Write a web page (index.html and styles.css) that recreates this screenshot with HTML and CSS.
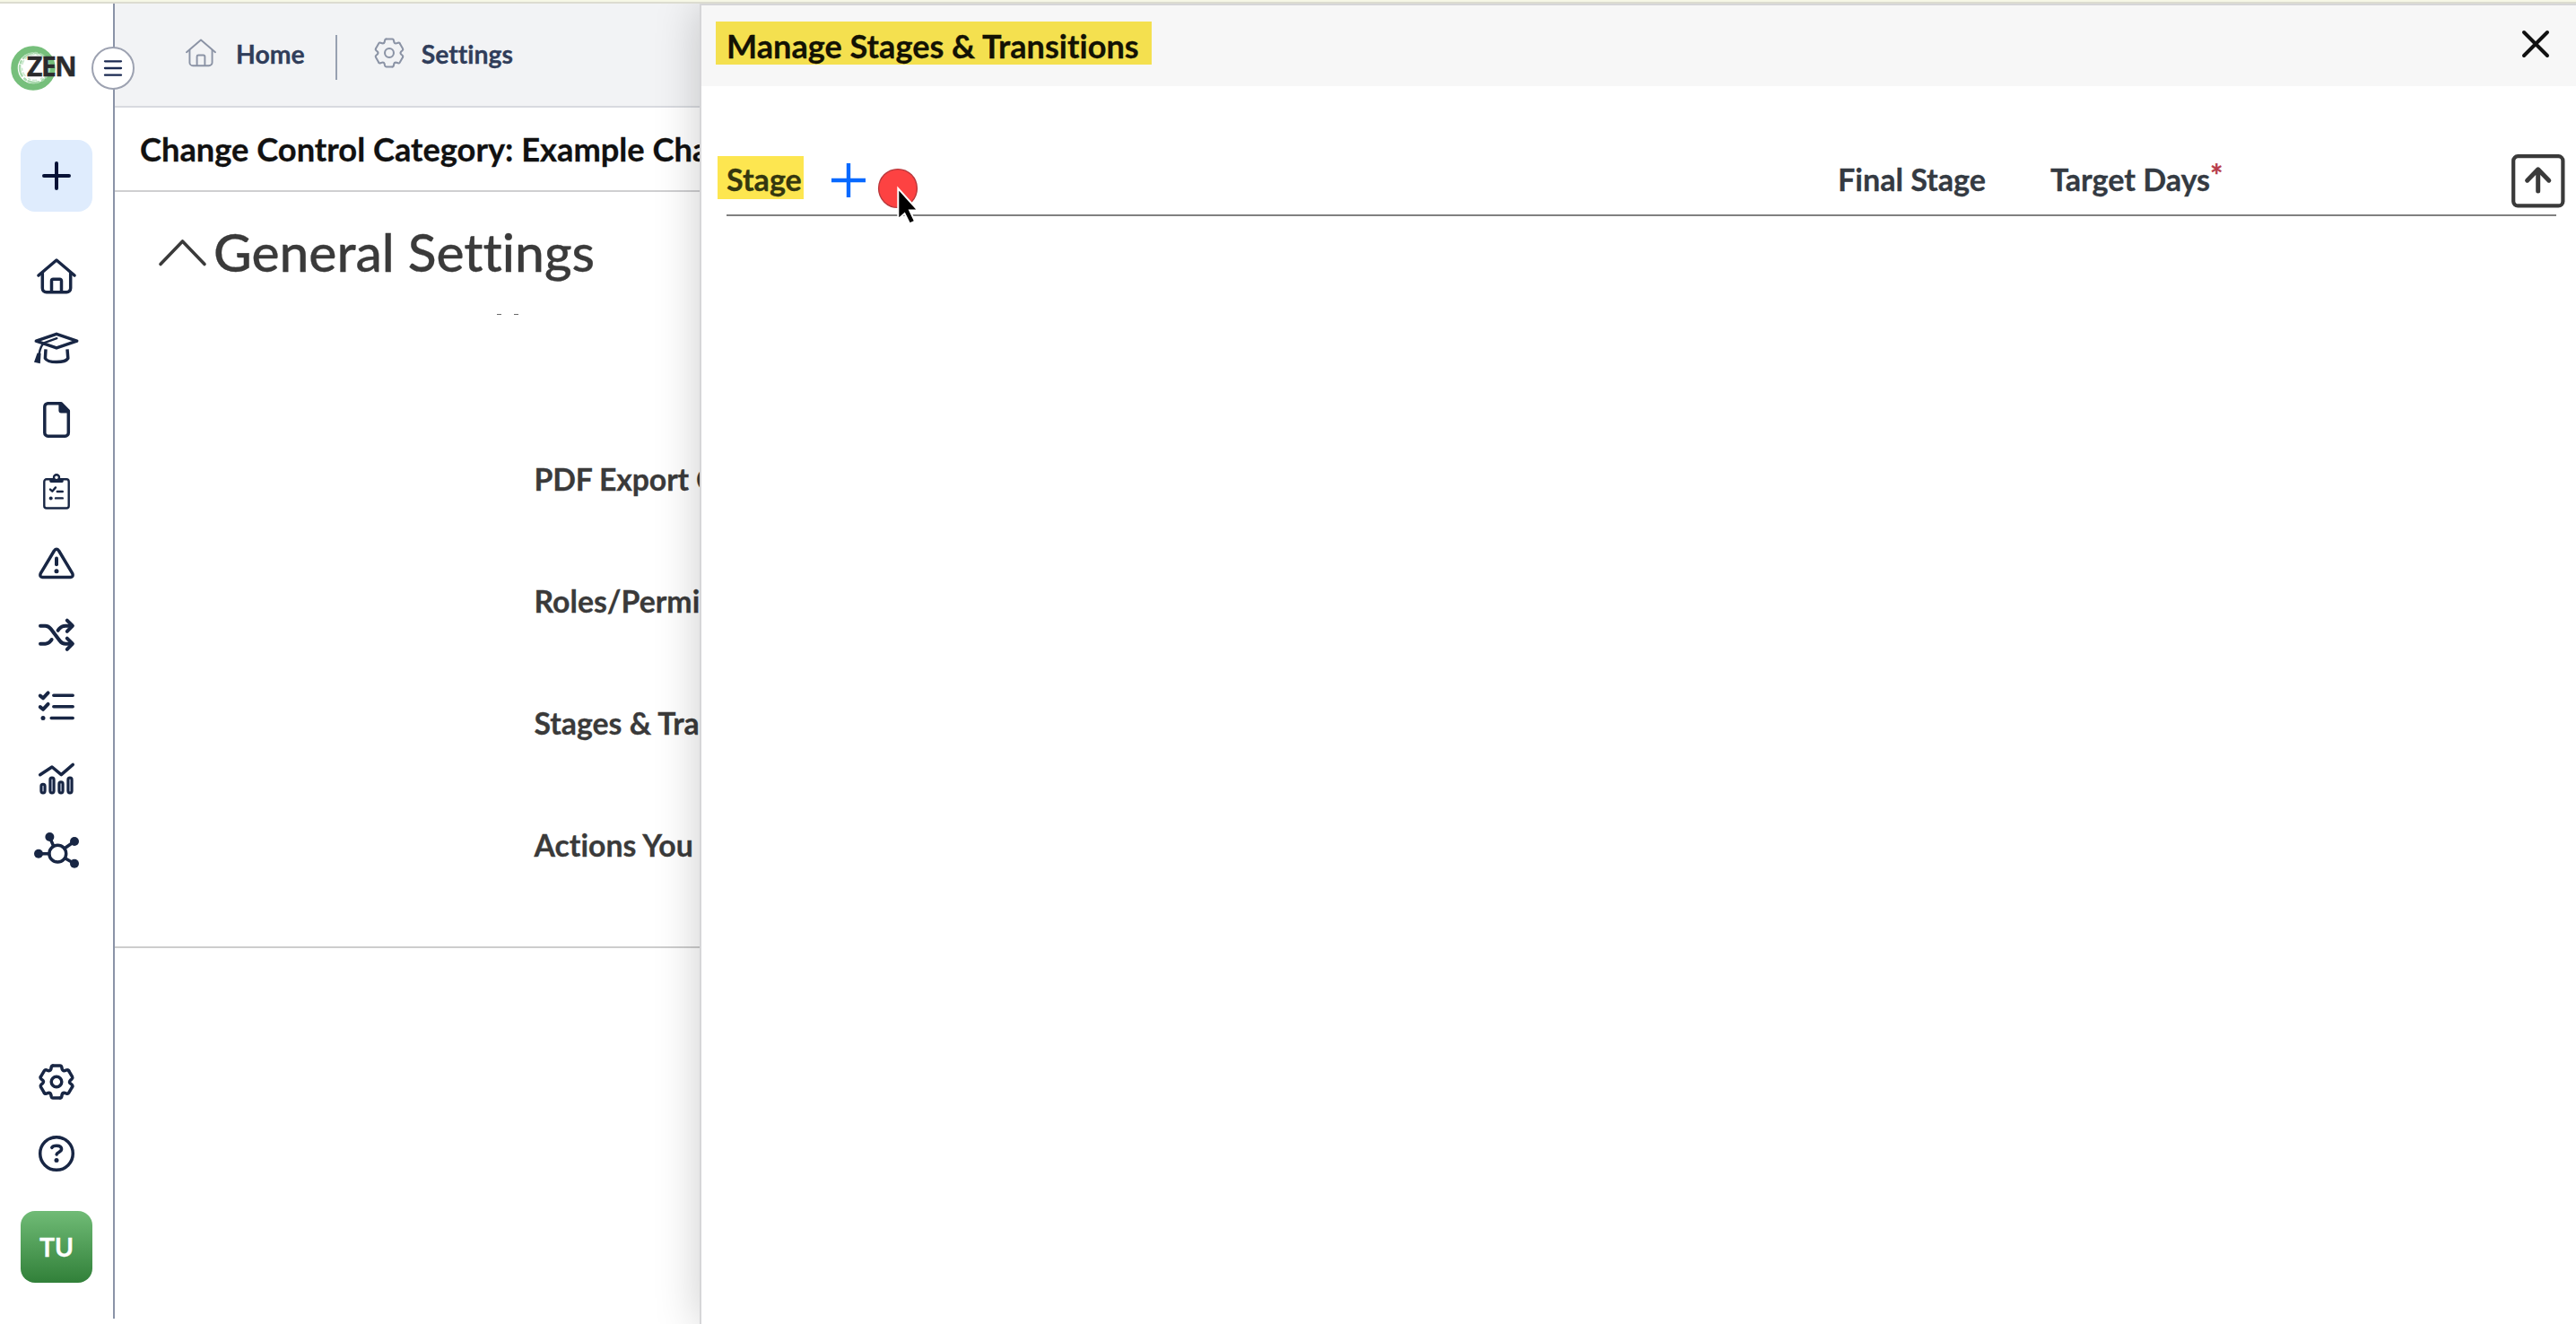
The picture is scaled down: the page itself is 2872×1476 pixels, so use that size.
FILE: index.html
```html
<!DOCTYPE html>
<html lang="en">
<head>
<meta charset="utf-8">
<title>Manage Stages &amp; Transitions</title>
<link rel="stylesheet" href="styles.css">
</head>
<body>
<svg class="defs" aria-hidden="true">
  <symbol id="home" viewBox="0 0 52 40">
    <path d="M6 19L26 2L46 19"/>
    <path d="M10.3 16V33.3a4.5 4.5 0 0 0 4.5 4.5H37.2a4.5 4.5 0 0 0 4.5-4.5V16"/>
    <path d="M20.5 37V25a1.8 1.8 0 0 1 1.8-1.8h7.4a1.8 1.8 0 0 1 1.8 1.8V37"/>
  </symbol>
  <symbol id="gear" viewBox="-21 -21 42 42">
    <g id="teeth">
      <path id="tooth" d="M-4-18H4Q5.4-18 5.8-16.4L6.2-14.2Q7-11.9 9.2-12.4L11.3-13.2Q12.9-13.7 13.6-12.5"/>
      <use href="#tooth" transform="rotate(60)"/>
      <use href="#tooth" transform="rotate(120)"/>
      <use href="#tooth" transform="rotate(180)"/>
      <use href="#tooth" transform="rotate(240)"/>
      <use href="#tooth" transform="rotate(300)"/>
    </g>
    <circle r="5.8"/>
  </symbol>
</svg>
<div class="top-strip"></div>
<div class="app">
  <aside class="sidebar">
    <div class="brand">
      <svg class="brand-ring" viewBox="0 0 52 52">
        <circle cx="26" cy="26" r="21" stroke="#76bf7b" stroke-width="7.5"/>
        <circle cx="27.5" cy="25.5" r="16.5" stroke="#a9d9ad" stroke-width="2.5" stroke-dasharray="3 2 7 3 2 4"/>
        <circle cx="28" cy="25" r="14.5" stroke="#c9e8cc" stroke-width="1.6" stroke-dasharray="2 5 4 3"/>
      </svg>
      <span class="brand-name">ZEN</span>
    </div>
    <button class="toggle"><svg viewBox="0 0 24 20"><path d="M3 2.3H21M3 10H21M3 17.7H21"/></svg></button>
    <button class="create"><svg viewBox="0 0 36 36"><path d="M18 4V32M4 18H32"/></svg></button>
    <nav class="nav">
      <a><svg class="icon"><use href="#home"/></svg></a>
      <a><svg class="icon" viewBox="0 0 52 40">
        <path d="M3.3 12.2L26 4.3L48.7 12.2L26 19.9Z"/>
        <path class="thin" d="M26.3 9.2L12.5 14.2Q8 17 6.6 27"/>
        <path class="solid" d="M4.6 25.5L1 35.8L7.8 37.3L8.6 26Z"/>
        <path d="M14 21.3L13.4 31.5C15 34.3 20 35.6 26 35.6S37 34.3 38.8 31.5L38 21.3" stroke-linecap="butt"/>
      </svg></a>
      <a><svg class="icon" viewBox="0 0 52 40">
        <path d="M16 1.7H31.2L39.3 10V34.5a3.7 3.7 0 0 1-3.7 3.7H16.5a3.7 3.7 0 0 1-3.7-3.7V5.4a3.7 3.7 0 0 1 3.7-3.7"/>
        <path class="solid" d="M28.4 1V10a2.4 2.4 0 0 0 2.4 2.4H40V9.5L31.5 1z"/>
      </svg></a>
      <a><svg class="icon fine" viewBox="0 0 52 40">
        <rect x="12.3" y="6.3" width="27.4" height="32.2" rx="2.6"/>
        <path class="solid" d="M18.3 5.5H33.7V8.5Q33.7 9.9 32.3 9.9H19.7Q18.3 9.9 18.3 8.5Z"/>
        <circle cx="26" cy="4.2" r="3" fill="#fff"/>
        <path d="M19 17.6L21.3 19.7L25 15.4M26.8 20H32.8M25 27.4H32.8"/>
        <circle class="solid" cx="19.7" cy="27.4" r="2"/>
      </svg></a>
      <a><svg class="icon" viewBox="0 0 52 40">
        <path d="M23.4 6Q26 2.6 28.6 6L43.8 31.3Q45.2 35.2 41.6 35.5H10.4Q6.8 35.2 8.2 31.3Z"/>
        <path class="bold" d="M26 14.4V21.3"/>
        <circle class="solid" cx="26" cy="28.7" r="2.5"/>
      </svg></a>
      <a><svg class="icon" viewBox="0 0 52 40">
        <path class="bold" d="M8 9.7H13.5C16.5 9.7 18 10.8 19.8 13.2L29.6 26.2C31.4 28.6 33 29.7 36 29.7H43"/>
        <path class="bold" d="M8 29.7H13.5C16.5 29.7 18 28.6 19.6 26.4L20.6 25M27.6 14.8L29.2 12.8C31 10.6 33 9.7 36 9.7H43"/>
        <path class="bold" d="M37.8 3.6L43.9 9.7L37.8 15.8M37.8 23.6L43.9 29.7L37.8 35.8"/>
      </svg></a>
      <a><svg class="icon" viewBox="0 0 52 40">
        <path class="bold" d="M7.8 7.6L11 10.3L16.6 4.4M7.8 20.1L11 22.8L16.6 16.9"/>
        <path d="M22.8 7.3H44.2M22.8 19.8H44.2M20.2 32.4H44.2"/>
        <circle class="solid" cx="11" cy="32.4" r="2.5"/>
      </svg></a>
      <a><svg class="icon" viewBox="0 0 52 40">
        <path d="M7.7 15.7L21 7L31.3 15.6L44.3 4.4"/>
        <g class="bars"><rect x="8.8" y="26.3" width="4.4" height="9.7" rx="2.2"/><rect x="18.8" y="19" width="4.4" height="17" rx="2.2"/><rect x="28.8" y="23.8" width="4.4" height="12.2" rx="2.2"/><rect x="38.8" y="19" width="4.4" height="17" rx="2.2"/></g>
      </svg></a>
      <a><svg class="icon" viewBox="0 0 52 40">
        <circle cx="27.3" cy="23.7" r="9.4"/>
        <path d="M18.5 5.5L22.8 15.5M46 10L35 17.8M6 23.7H17.5M46 34.7L35.5 28.8"/>
        <g class="solid"><circle cx="18.4" cy="5" r="5"/><circle cx="46" cy="10" r="5"/><circle cx="6" cy="23.7" r="5"/><circle cx="46" cy="34.7" r="5"/></g>
      </svg></a>
    </nav>
    <div class="nav nav-bottom">
      <a><svg class="icon gear"><use href="#gear"/></svg></a>
      <a><svg class="icon" viewBox="-26 -20 52 40">
        <circle r="18.3"/>
        <path d="M-5.2-6.6C-4.4-8.2-2.4-8.8 0-8.8C3.4-8.8 5.6-7.3 5.6-4.9C5.6-1.6.5-1.6.1 1.1"/>
        <circle class="solid" cy="7.4" r="2.5"/>
      </svg></a>
    </div>
    <div class="avatar">TU</div>
  </aside>
  <main class="main">
    <header class="topbar">
      <a class="crumb"><svg class="crumb-home"><use href="#home"/></svg>Home</a>
      <span class="divider"></span>
      <a class="crumb"><svg class="crumb-gear"><use href="#gear"/></svg>Settings</a>
    </header>
    <h1 class="page-title">Change Control Category: Example Cha</h1>
    <section class="section">
      <h2 class="section-title"><svg viewBox="0 0 56 32"><path d="M4 28.5L28.5 3L53 28.5"/></svg>General Settings</h2>
      <div class="scrolled"><i></i><i></i></div>
      <ul class="rows">
        <li>PDF Export C</li>
        <li>Roles/Permi</li>
        <li>Stages &amp; Tra</li>
        <li>Actions You</li>
      </ul>
    </section>
  </main>
</div>
<section class="drawer">
  <header class="drawer-head">
    <h2 class="drawer-title">Manage Stages &amp; Transitions</h2>
    <svg class="close" viewBox="0 0 32 32"><path d="M3 3L29 29M29 3L3 29"/></svg>
  </header>
  <div class="columns">
    <span class="col-stage">Stage</span>
    <svg class="add" viewBox="0 0 38 38"><path d="M19 0V38M0 19H38"/></svg>
    <span class="col-final">Final Stage</span>
    <span class="col-days">Target Days<sup>*</sup></span>
    <svg class="export" viewBox="0 0 60 60"><rect x="2.2" y="2.2" width="55.2" height="55.2" rx="5"/><path d="M29.7 41V17M17.6 29.2L29.7 16.8L41.8 29.2"/></svg>
  </div>
</section>
<svg class="pointer" viewBox="0 0 48 66">
  <circle cx="23" cy="23" r="21.4"/>
  <path d="M23.3 23V57.5L30.5 51L36.2 62.4L42 59.6L36.2 47.5H45.5Z"/>
</svg>
</body>
</html>
```
FILE: styles.css
```css
* { box-sizing: border-box; margin: 0; padding: 0; }
body {
  width: 2872px;
  height: 1476px;
  overflow: hidden;
  position: relative;
  background: #fff;
  font-family: Lato, "Liberation Sans", sans-serif;
  font-weight: 700;
  font-variant-ligatures: none;
  -webkit-text-stroke: 0.3px currentColor;
}
svg { display: block; fill: none; stroke-linecap: round; stroke-linejoin: round; flex: none; }
.defs { position: absolute; width: 0; height: 0; }
button { border: 0; }
.top-strip { height: 4px; background: #f6f7e6; border-bottom: 2px solid #dcdcd0; }
.app { display: flex; height: 1472px; }

/* Sidebar */
.sidebar {
  position: relative;
  width: 128px;
  height: 1466px;
  border-right: 2px solid #8a93a7;
  display: flex;
  flex-direction: column;
  align-items: center;
  flex: none;
}
.brand { position: relative; width: 100%; height: 152px; padding: 46px 0 0 11px; }
.brand-ring { width: 52px; height: 52px; }
.brand-name {
  position: absolute;
  left: 30px;
  top: 50px;
  font: 700 30px/40px "Open Sans", sans-serif;
  letter-spacing: -1.4px;
  color: #2b2b2d;
  -webkit-text-stroke: 0.5px #2b2b2d;
}
.toggle {
  position: absolute;
  left: 102px;
  top: 48px;
  width: 48px;
  height: 48px;
  border: 2px solid #9da2b1;
  border-radius: 50%;
  background: #fff;
  display: flex;
  align-items: center;
  justify-content: center;
}
.toggle svg { width: 24px; height: 20px; stroke: #1b2a52; stroke-width: 2.3; }
.create {
  width: 80px;
  height: 80px;
  border-radius: 16px;
  background: #dfecfd;
  display: flex;
  align-items: center;
  justify-content: center;
  flex: none;
}
.create svg { width: 36px; height: 36px; stroke: #061236; stroke-width: 4; }
.nav { display: flex; flex-direction: column; margin-top: 32px; }
.nav a { height: 80px; display: flex; align-items: center; justify-content: center; }
.nav-bottom { margin-top: 178px; }
.icon { width: 52px; height: 40px; stroke: #182644; stroke-width: 3.5; overflow: visible; }
.icon.gear { width: 42px; height: 42px; }
.icon .thin { stroke-width: 2.4; }
.icon .bold { stroke-width: 4; }
.icon .solid { fill: #182644; stroke: none; }
.icon.fine { stroke-width: 2.4; }
.icon .bars { fill: #a7b1c4; stroke-width: 2.9; }
.avatar {
  width: 80px;
  height: 80px;
  margin-top: 24px;
  border-radius: 16px;
  background: linear-gradient(#70bb76, #318039);
  color: #fff;
  font-size: 28.4px;
  line-height: 80px;
  text-align: center;
  flex: none;
}

/* Page behind the drawer */
.main { flex: 1; }
.topbar {
  height: 116px;
  padding: 0 0 0 75px;
  background: #f2f3f5;
  border-bottom: 2px solid #d8dadf;
  display: flex;
  align-items: center;
  color: #303d5a;
  font-size: 28.4px;
}
.crumb { display: flex; align-items: center; line-height: 34px; padding-bottom: 2px; }
.crumb svg { stroke: #8b93a5; stroke-width: 2.4; }
.crumb-home { width: 42px; height: 32px; margin-right: 18px; margin-top: -2px; }
.crumb-gear { width: 36px; height: 36px; margin-right: 18px; margin-top: -2px; }
.divider { width: 2px; height: 50px; margin: 6px 40px 0 34px; background: #97a0b1; }
.page-title {
  height: 94px;
  padding-left: 28px;
  border-bottom: 2px solid #cfcfd1;
  font-size: 36.25px;
  line-height: 92px;
  color: #111;
  white-space: nowrap;
}
.section { height: 843px; border-bottom: 2px solid #cdcdcd; color: #3a3a3a; overflow: hidden; }
.section-title {
  display: flex;
  align-items: flex-start;
  padding: 33px 0 0 47px;
  font-size: 58.7px;
  font-weight: 500;
  line-height: 68px;
}
.section-title svg { width: 56px; height: 32px; margin: 19px 7px 0 0; stroke: #3a3a3a; stroke-width: 3.6; }
.scrolled { display: flex; gap: 14px; padding: 35px 0 0 426px; }
.scrolled i { width: 5px; height: 1px; background: #6a6a6a; }
.rows { list-style: none; padding: 115px 0 0 467.5px; font-size: 33.8px; }
.rows li { height: 136px; line-height: 136px; white-space: nowrap; }
.rows li:first-child { letter-spacing: -0.15px; }

/* Drawer */
.drawer {
  position: absolute;
  left: 780px;
  top: 4px;
  width: 2092px;
  height: 1472px;
  background: #fff;
  border: solid #d6d6d8;
  border-width: 2px 0 0 2px;
  box-shadow: 0 2px 48px rgba(0, 0, 0, .2);
  clip-path: inset(0 0 0 -80px);
}
.drawer-head {
  height: 90px;
  padding: 18px 29px 0 16px;
  background: #f7f7f7;
  display: flex;
  justify-content: space-between;
}
.drawer-title {
  width: 486px;
  height: 48px;
  padding-left: 12px;
  background: #f4e04f;
  color: #131204;
  font-size: 36.15px;
  line-height: 54px;
  white-space: nowrap;
}
.close { width: 32px; height: 32px; margin-top: 9px; stroke: #111; stroke-width: 4; }
.columns {
  width: 2040px;
  height: 67px;
  margin: 78px 0 0 28px;
  border-bottom: 2px solid #808080;
  display: flex;
  color: #343a42;
  font-size: 34.1px;
  line-height: 52px;
}
.columns > * { flex: none; }
.col-stage {
  height: 48px;
  width: 96px;
  margin-left: -10px;
  padding-left: 10px;
  background: #fde650;
  color: #34370f;
}
.add { width: 38px; height: 38px; margin: 8px 0 0 31px; stroke: #0769ff; stroke-width: 4.4; stroke-linecap: butt; }
.col-final { margin-left: 1084px; width: 237px; }
.col-days { width: 509px; }
.col-days sup { font-size: 34px; line-height: 0; vertical-align: 5px; color: #b73b4a; }
.export { width: 60px; height: 60px; margin: -2px 0 0 5px; stroke: #3a3a3a; stroke-width: 4.2; }
.export path { stroke-width: 5; }

/* Click marker and cursor */
.pointer { position: absolute; left: 978px; top: 187px; width: 48px; height: 66px; }
.pointer circle { fill: #fd4242; stroke: #b9383c; stroke-width: 1.4; }
.pointer path { fill: #000; stroke: #fff; stroke-width: 2; stroke-linejoin: miter; }
```
